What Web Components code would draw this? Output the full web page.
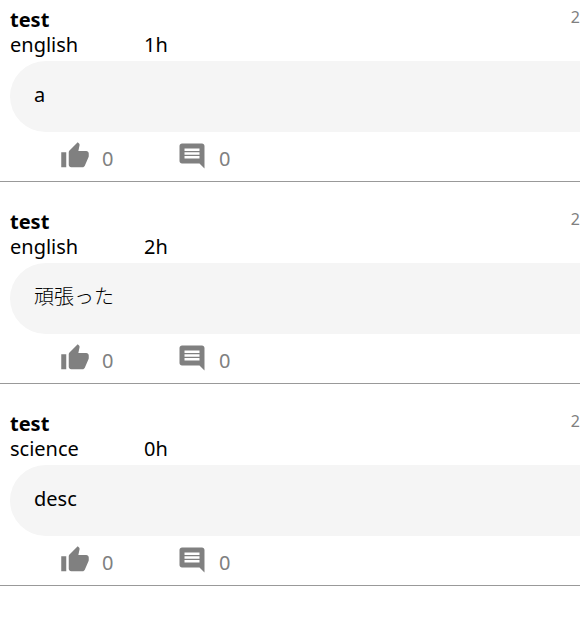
<!DOCTYPE html>
<html lang="en">
<head>
<meta charset="utf-8">
<meta name="viewport" content="width=device-width, initial-scale=1">
<title>Study posts</title>
<style>
body { margin: 0; background: #fff; color: #000; font: 400 20px/25px "Noto Sans", "Noto Sans CJK JP", sans-serif; }
span:lang(ja) { font-weight: 300; }
</style>
</head>
<body>
<post-feed>
  <study-post name="test" subject="english" hours="1h" date="2" likes="0" comments="0">a</study-post>
  <study-post name="test" subject="english" hours="2h" date="2" likes="0" comments="0"><span lang="ja">頑張った</span></study-post>
  <study-post name="test" subject="science" hours="0h" date="2" likes="0" comments="0">desc</study-post>
</post-feed>
<script>
class PostFeed extends HTMLElement {
  constructor() {
    super();
    this.attachShadow({ mode: "open" }).innerHTML = `
      <style>
        :host { display: block; }
        main { display: flex; flex-direction: column; gap: 20px; }
      </style>
      <main><slot></slot></main>`;
  }
}

const ICONS = {
  like: "M1 21h4V9H1v12zm22-11c0-1.1-.9-2-2-2h-6.31l.95-4.57.03-.32c0-.41-.17-.79-.44-1.06L14.17 1 7.59 7.59C7.22 7.95 7 8.45 7 9v10c0 1.1.9 2 2 2h9c.83 0 1.54-.5 1.84-1.22l3.02-7.05c.09-.23.14-.47.14-.73v-2z",
  comment: "M21.99 4c0-1.1-.89-2-1.99-2H4c-1.1 0-2 .9-2 2v12c0 1.1.9 2 2 2h14l4 4-.01-18zM18 14H6v-2h12v2zm0-3H6V9h12v2zm0-3H6V6h12v2z"
};

class PostAction extends HTMLElement {
  connectedCallback() {
    const kind = this.getAttribute("kind");
    this.attachShadow({ mode: "open" }).innerHTML = `
      <style>
        :host { display: block; }
        button { display: flex; align-items: flex-start; gap: 12px; padding: 0; border: 0;
                 background: none; color: #808080; font: inherit; cursor: pointer; }
        svg { width: 30px; height: 30px; fill: currentColor; }
        span { padding-top: 5px; }
      </style>
      <button type="button" aria-label="${kind}"><svg viewBox="0 0 24 24" aria-hidden="true"><path d="${ICONS[kind]}"/></svg><span><slot></slot></span></button>`;
  }
}

class StudyPost extends HTMLElement {
  connectedCallback() {
    const a = n => this.getAttribute(n);
    this.attachShadow({ mode: "open" }).innerHTML = `
      <style>
        :host { display: block; padding-top: 7px; border-bottom: 1px solid #999; }
        header { display: flex; justify-content: space-between; padding-left: 10px; }
        h2 { margin: 0; font-size: 20px; line-height: 25px; font-weight: 700; }
        time { color: #808080; font-size: 16px; line-height: 20px; }
        .study { display: grid; grid-template-columns: 134px 1fr; padding-left: 10px; }
        .text { margin: 4px 0 0 10px; padding: 21px 24px 25px; background: #f5f5f5;
                border-radius: 36px 0 0 36px; }
        footer { display: grid; grid-template-columns: 117px auto; justify-content: start;
                 padding: 9px 0 10px 60px; }
      </style>
      <article>
        <header><h2>${a("name")}</h2><time>${a("date")}</time></header>
        <div class="study"><span>${a("subject")}</span><span>${a("hours")}</span></div>
        <div class="text"><slot></slot></div>
        <footer>
          <post-action kind="like">${a("likes")}</post-action>
          <post-action kind="comment">${a("comments")}</post-action>
        </footer>
      </article>`;
  }
}

customElements.define("post-feed", PostFeed);
customElements.define("post-action", PostAction);
customElements.define("study-post", StudyPost);
</script>
</body>
</html>
